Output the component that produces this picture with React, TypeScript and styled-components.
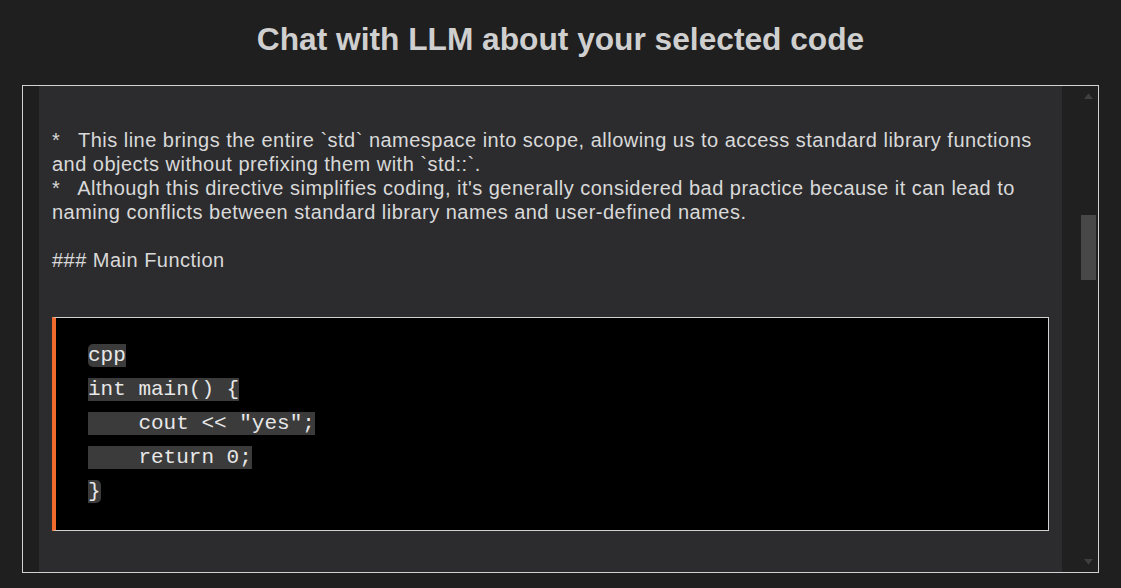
import React from "react";
import styled, { createGlobalStyle } from "styled-components";

const GlobalStyle = createGlobalStyle`
  html, body {
    margin: 0;
    padding: 0;
    background: #1f1f1f;
  }
  body {
    font-family: "Liberation Sans", Arial, sans-serif;
  }
`;

const Page = styled.div`
  height: 588px;
  display: flex;
  flex-direction: column;
  padding: 0 22px 15px;
  box-sizing: border-box;
  background: #1f1f1f;
`;

const Title = styled.h1`
  margin: 0;
  padding-top: 21px;
  height: 85px;
  flex: none;
  box-sizing: border-box;
  font-family: "Liberation Sans", Arial, sans-serif;
  font-size: 31.7px;
  line-height: 36px;
  font-weight: 700;
  color: #cfcfcf;
  text-align: center;
`;

const ChatBox = styled.div`
  flex: 1;
  display: flex;
  border: 1px solid #d2d2d2;
  min-height: 0;
`;

const Gutter = styled.div`
  width: 16px;
  flex: none;
  background: #1e1e1e;
`;

const Panel = styled.div`
  flex: 1;
  min-width: 0;
  background: #2c2c2e;
  padding: 42px 13px 0;
  overflow: hidden;
  color: #d9d9d9;
  font-family: "Liberation Sans", Arial, sans-serif;
  font-size: 20px;
  letter-spacing: 0.48px;
  line-height: 24px;
`;

const Prose = styled.div`
  white-space: pre-wrap;
`;

const CodeBlock = styled.pre`
  margin: 45px 0 0;
  background: #000;
  border: 1px solid #d2d2d2;
  border-left: 4px solid #f26b2e;
  padding: 21px 32px;
  font-family: "Liberation Mono", "Courier New", monospace;
  font-size: 21px;
  letter-spacing: 0;
  line-height: 34px;
  white-space: pre;
`;

const Code = styled.code`
  font-family: inherit;
  background: #3b3b3b;
  color: #e8e8e8;
  border-radius: 5px;
`;

const Track = styled.div`
  width: 36px;
  flex: none;
  background: #202020;
  display: flex;
  flex-direction: column;
  align-items: flex-end;
  padding: 7px 2px 7px 0;
  box-sizing: border-box;
`;

const Thumb = styled.div`
  width: 15px;
  height: 65px;
  margin-top: 116px;
  background: #484848;
`;

const Spacer = styled.div`
  flex: 1;
`;

const Arrow = ({ down }: { down?: boolean }) => (
  <svg width="15" height="6" viewBox="0 0 15 6" style={{ display: "block" }}>
    {down ? (
      <polygon points="3,0 12,0 7.5,5.5" fill="#3f3f3f" />
    ) : (
      <polygon points="7.5,0.5 12,6 3,6" fill="#3f3f3f" />
    )}
  </svg>
);

const prose = `*   This line brings the entire \`std\` namespace into scope, allowing us to access standard library functions and objects without prefixing them with \`std::\`.
*   Although this directive simplifies coding, it's generally considered bad practice because it can lead to naming conflicts between standard library names and user-defined names.

### Main Function`;

const code = `cpp
int main() {
    cout << "yes";
    return 0;
}`;

export default function App() {
  return (
    <>
      <GlobalStyle />
      <Page>
        <Title>Chat with LLM about your selected code</Title>
        <ChatBox>
          <Gutter />
          <Panel>
            <Prose>{prose}</Prose>
            <CodeBlock>
              <Code>{code}</Code>
            </CodeBlock>
          </Panel>
          <Track>
            <Arrow />
            <Thumb />
            <Spacer />
            <Arrow down />
          </Track>
        </ChatBox>
      </Page>
    </>
  );
}
